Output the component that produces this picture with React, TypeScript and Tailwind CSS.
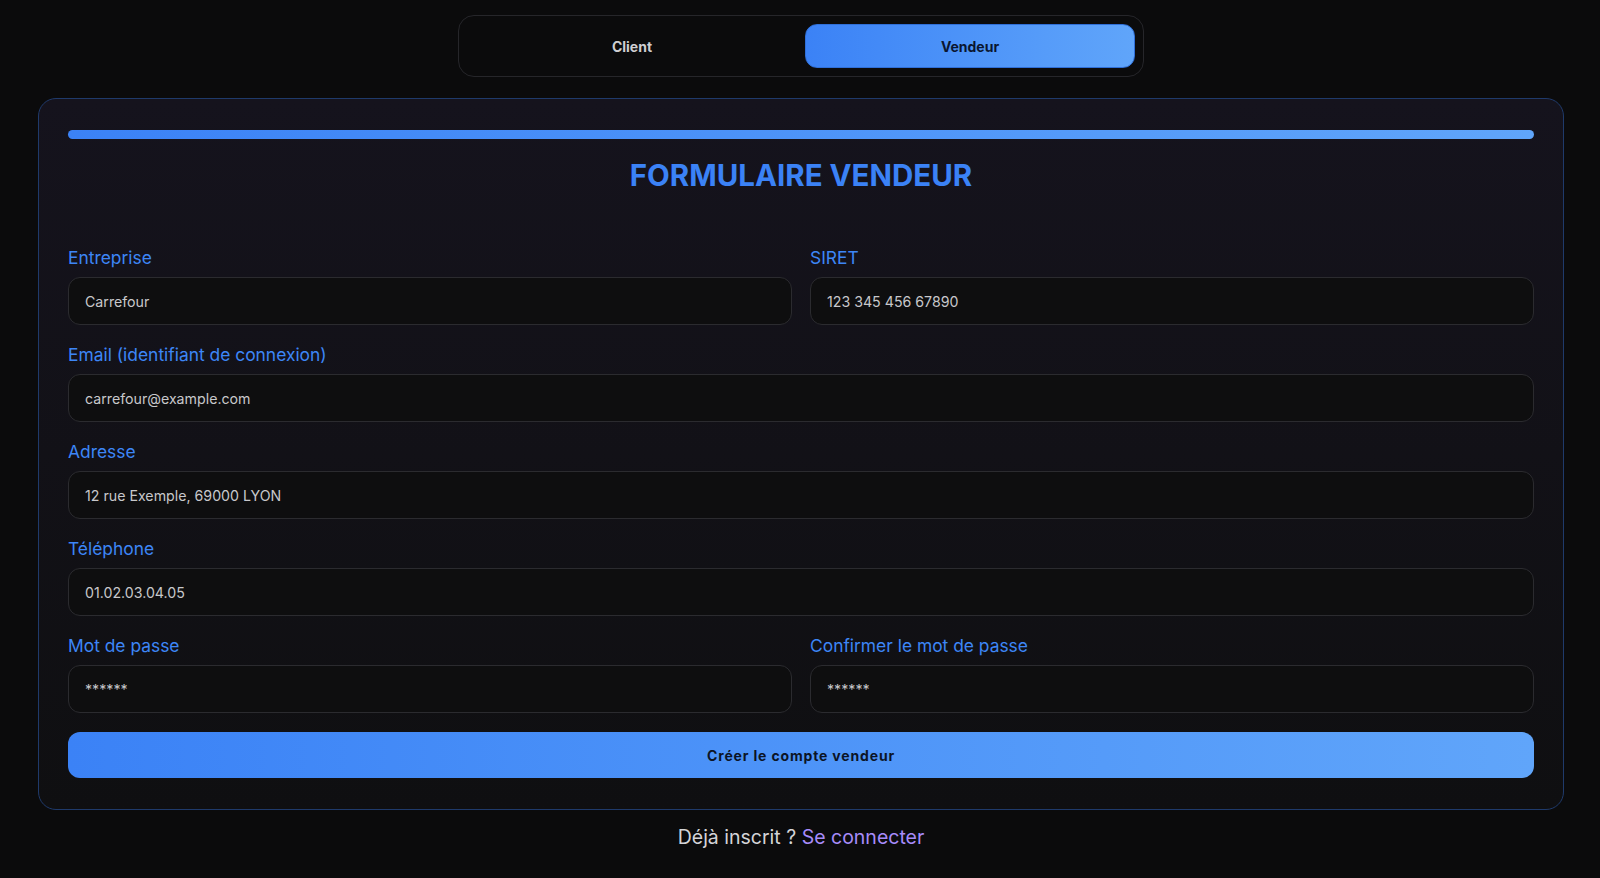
import { useState } from "react";

type Field = {
  label: string;
  value: string;
};

function Input({ label, value }: Field) {
  return (
    <label className="flex flex-col">
      <span className="text-[17.4px] leading-6 text-[#3d86f6] mb-[7px]">{label}</span>
      <input
        defaultValue={value}
        className="h-12 w-full rounded-xl border border-[#2b2b2f] bg-[#0e0e0f] px-4 text-[14.2px] text-[#c8c8cb] outline-none"
      />
    </label>
  );
}

export default function App() {
  const [role, setRole] = useState<"client" | "vendeur">("vendeur");

  return (
    <div className="min-h-screen bg-[#0b0b0c] pl-[38px] pr-[36px] pt-[15px] font-['Inter',sans-serif]">
      {/* role switch */}
      <div className="mx-auto grid h-[62px] w-[686px] grid-cols-2 gap-2 rounded-2xl border border-[#26262a] bg-[#0b0b0c] p-2">
        <button
          onClick={() => setRole("client")}
          className={
            role === "client"
              ? "rounded-xl bg-gradient-to-r from-[#3b82f6] to-[#60a5fa] text-[14px] font-bold text-[#0a1630]"
              : "rounded-xl text-[14px] font-bold text-[#cfcfd2]"
          }
        >
          Client
        </button>
        <button
          onClick={() => setRole("vendeur")}
          className={
            role === "vendeur"
              ? "rounded-xl border border-[#2f6fd8] bg-gradient-to-r from-[#3b82f6] to-[#60a5fa] text-[14px] font-bold text-[#0a1630]"
              : "rounded-xl text-[14px] font-bold text-[#cfcfd2]"
          }
        >
          Vendeur
        </button>
      </div>

      <div className="mt-[21px] rounded-[18px] border border-[#1f3a6b] bg-gradient-to-b from-[#15131d] to-[#0f0f11] px-[29px] pt-[31px] pb-[31px]">
        <div className="h-[9px] rounded-full bg-gradient-to-r from-[#3b82f6] to-[#60a5fa]" />
        <h1 className="mt-[18px] text-center text-[29.5px] leading-9 font-bold text-[#3b82f6]">
          FORMULAIRE VENDEUR
        </h1>

        <form className="mt-[53px] flex flex-col gap-[18px]" onSubmit={(e) => e.preventDefault()}>
          <div className="grid grid-cols-2 gap-[18px]">
            <Input label="Entreprise" value="Carrefour" />
            <Input label="SIRET" value="123 345 456 67890" />
          </div>
          <Input label="Email (identifiant de connexion)" value="carrefour@example.com" />
          <Input label="Adresse" value="12 rue Exemple, 69000 LYON" />
          <Input label="Téléphone" value="01.02.03.04.05" />
          <div className="grid grid-cols-2 gap-[18px]">
            <Input label="Mot de passe" value="******" />
            <Input label="Confirmer le mot de passe" value="******" />
          </div>
          <button
            type="submit"
            className="mt-[1px] h-[46px] rounded-xl bg-gradient-to-r from-[#3b82f6] to-[#60a5fa] text-[14px] font-bold tracking-[0.06em] text-[#0b1426]"
          >
            Créer le compte vendeur
          </button>
        </form>
      </div>

      <p className="mt-[13px] text-center text-[19.5px] leading-7 text-[#d4d4d8]">
        Déjà inscrit ? <a className="text-[#a78bfa]">Se connecter</a>
      </p>
    </div>
  );
}
